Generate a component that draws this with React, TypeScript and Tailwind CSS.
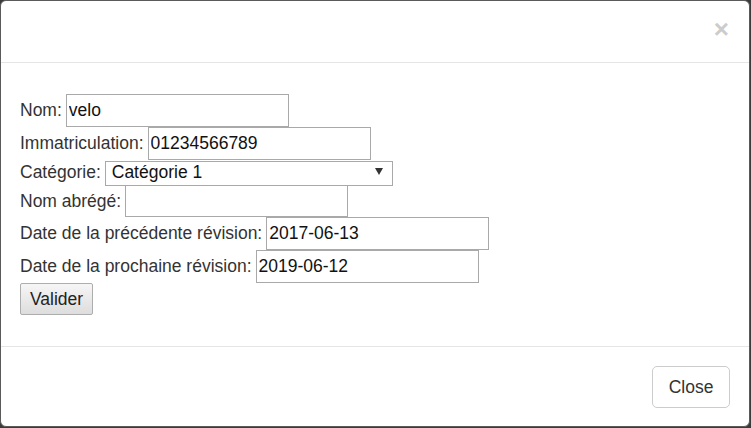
import React, { useState } from "react";

const FONT = { fontFamily: '"Liberation Sans", Arial, sans-serif' };

const Field: React.FC<{ label: string; value?: string; rowH?: string; inputH?: string }> = ({
  label,
  value = "",
  rowH = "h-[33px]",
  inputH = "h-[33px]",
}) => {
  const [val, setVal] = useState<string>(value);
  return (
    <div className={`flex items-center gap-[4px] ${rowH}`}>
      <span>{label}</span>
      <input
        type="text"
        value={val}
        onChange={(e) => setVal(e.target.value)}
        className={`w-[223px] shrink-0 border border-[#a9a9a9] bg-white px-[2px] text-[17.5px] text-[#111] outline-none ${inputH}`}
      />
    </div>
  );
};

export default function App() {
  const [category, setCategory] = useState<string>("1");

  return (
    <div className="h-[428px] w-[751px] bg-[#3b3b3b]" style={FONT}>
      <div className="flex h-[427px] w-[750px] flex-col overflow-hidden rounded-[6px] border border-[#5a5a5a] bg-white text-[17.5px] text-[#333]">
        {/* Header */}
        <div className="flex h-[62px] shrink-0 justify-end border-b border-[#e5e5e5] pr-[20px] pt-[15px]">
          <button className="h-[26px] text-[26px] leading-none font-bold text-[#cccccc]">×</button>
        </div>

        {/* Body */}
        <div className="flex flex-col pl-[19px] pt-[31px] pb-[31px]">
          <Field label="Nom:" value="velo" />
          <Field label="Immatriculation:" value="01234566789" />
          <div className="flex h-[25px] items-center gap-[4px]">
            <span>Catégorie:</span>
            <div className="relative">
              <select
                value={category}
                onChange={(e) => setCategory(e.target.value)}
                className="h-[25px] w-[288px] appearance-none border border-[#a9a9a9] bg-white pl-[6px] text-[17.5px] leading-none text-[#111] outline-none"
              >
                <option value="1">Catégorie 1</option>
                <option value="2">Catégorie 2</option>
              </select>
              <span className="pointer-events-none absolute right-[10px] top-[9px] h-0 w-0 border-x-[4px] border-t-[7px] border-x-transparent border-t-[#333]" />
            </div>
          </div>
          <Field label="Nom abrégé:" rowH="h-[32px]" inputH="h-[32px]" />
          <Field label="Date de la précédente révision:" value="2017-06-13" />
          <Field label="Date de la prochaine révision:" value="2019-06-12" />
          <div>
            <button className="h-[32px] w-[73px] rounded-[2px] border border-[#adadad] bg-gradient-to-b from-[#f6f6f6] to-[#dddddd] text-[17.5px] text-[#222]">
              Valider
            </button>
          </div>
        </div>

        {/* Footer */}
        <div className="flex flex-1 items-start justify-end border-t border-[#e5e5e5] pr-[19px] pt-[19px]">
          <button className="h-[42px] w-[78px] rounded-[5px] border border-[#cccccc] bg-white text-[17.5px] text-[#333]">
            Close
          </button>
        </div>
      </div>
    </div>
  );
}
